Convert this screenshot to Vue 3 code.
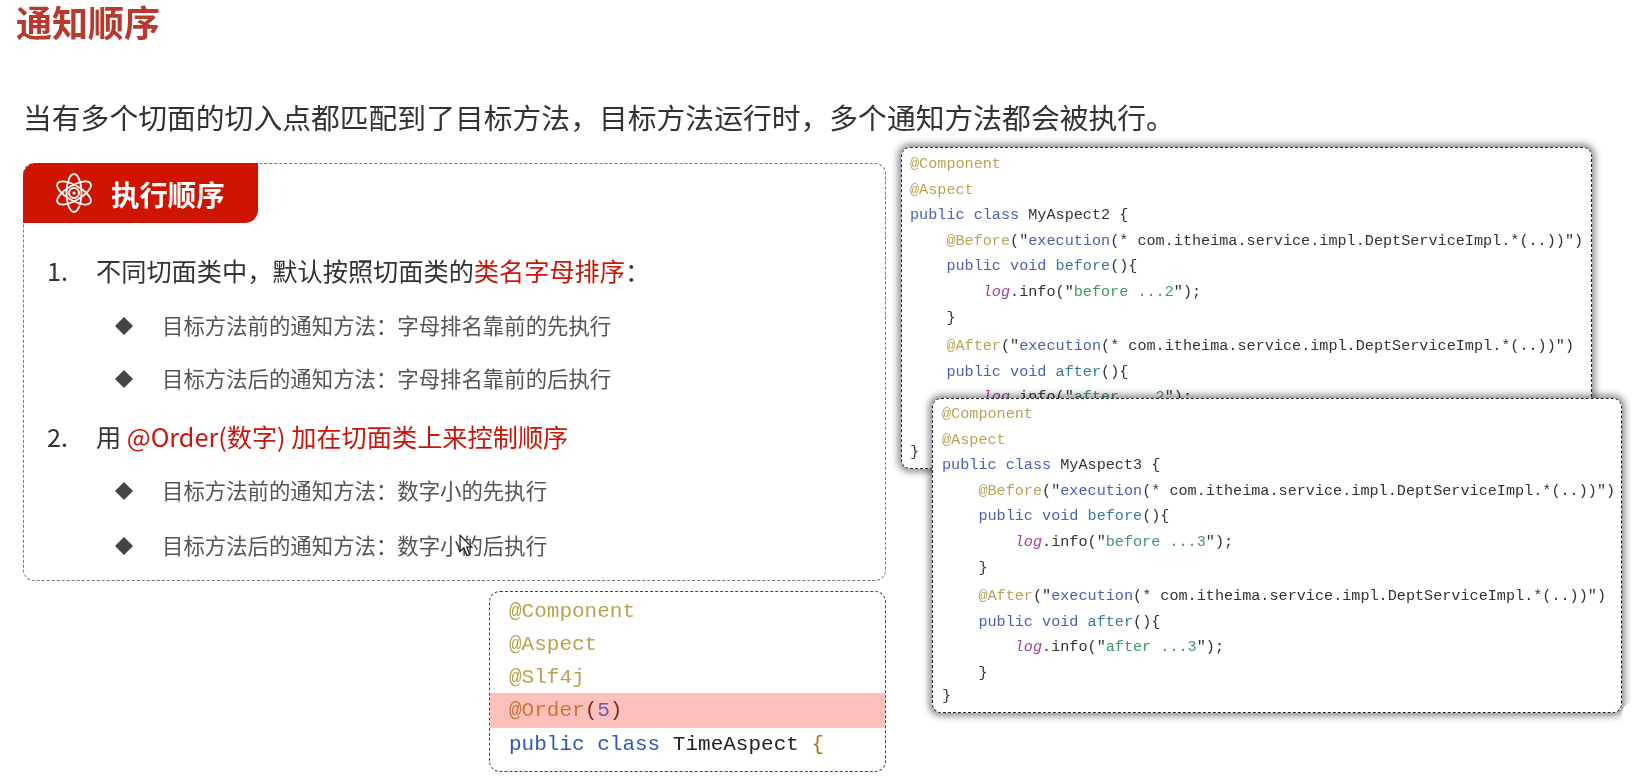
<script setup>
const rows = [
  { type: 'main', num: '1.', parts: [{ t: '不同切面类中，默认按照切面类的' }, { t: '类名字母排序', red: true }, { t: '：' }], cls: 'r1' },
  { type: 'sub', text: '目标方法前的通知方法：字母排名靠前的先执行', cls: 's1' },
  { type: 'sub', text: '目标方法后的通知方法：字母排名靠前的后执行', cls: 's2' },
  { type: 'main', num: '2.', parts: [{ t: '用 ' }, { t: '@Order(数字) 加在切面类上来控制顺序', red: true }], cls: 'r2' },
  { type: 'sub', text: '目标方法前的通知方法：数字小的先执行', cls: 's3' },
  { type: 'sub', text: '目标方法后的通知方法：数字小的后执行', cls: 's4' }
]

const aspect = (n) => [
  { c: 1, p: [['an', '@Component']] },
  { c: 1, p: [['an', '@Aspect']] },
  { p: [['kw', 'public class '], ['', 'MyAspect' + n + ' {']] },
  { p: [['', '    '], ['an', '@Before'], ['', '("'], ['kw', 'execution'], ['', '(* com.itheima.service.impl.DeptServiceImpl.*(..))")']] },
  { p: [['', '    '], ['kw', 'public void '], ['me', 'before'], ['', '(){']] },
  { p: [['', '        '], ['lg', 'log'], ['', '.info("'], ['st', 'before ...' + n], ['', '");']] },
  { p: [['', '    }']] },
  { gap: true, p: [['', '    '], ['an', '@After'], ['', '("'], ['kw', 'execution'], ['', '(* com.itheima.service.impl.DeptServiceImpl.*(..))")']] },
  { p: [['', '    '], ['kw', 'public void '], ['me', 'after'], ['', '(){']] },
  { p: [['', '        '], ['lg', 'log'], ['', '.info("'], ['st', 'after ...' + n], ['', '");']] },
  { p: [['', '    }']] },
  { end: true, p: [['', '}']] }
]
const a2 = aspect(2)
const a3 = aspect(3)
</script>

<template>
  <div class="page">
    <h1 class="title">通知顺序</h1>
    <p class="lead">当有多个切面的切入点都匹配到了目标方法，目标方法运行时，多个通知方法都会被执行。</p>

    <div class="columns">
      <div class="left">
        <section class="panel">
          <header class="tag">
            <svg class="atom" viewBox="0 0 40 40" fill="none" stroke="#fff" stroke-width="1.8">
              <ellipse cx="20" cy="20" rx="19" ry="7.5" transform="rotate(30 20 20)" />
              <ellipse cx="20" cy="20" rx="19" ry="7.5" transform="rotate(90 20 20)" />
              <ellipse cx="20" cy="20" rx="19" ry="7.5" transform="rotate(150 20 20)" />
              <circle cx="20" cy="20" r="5" stroke-width="2" />
              <circle cx="20" cy="20" r="1.6" fill="#fff" stroke="none" />
            </svg>
            <span>执行顺序</span>
          </header>
          <div class="list">
            <div v-for="r in rows" :key="r.cls" :class="[r.type, r.cls]">
              <template v-if="r.type === 'main'">
                <span class="num">{{ r.num }}</span>
                <span><span v-for="p in r.parts" :key="p.t" :class="{ red: p.red }">{{ p.t }}</span></span>
              </template>
              <template v-else>
                <svg class="diamond" viewBox="0 0 18 18"><polygon points="9,0 18,9 9,18 0,9" fill="#444" /></svg>
                <span>{{ r.text }}</span>
              </template>
            </div>
          </div>
        </section>

        <div class="snippet">
          <div class="sl an">@Component</div>
          <div class="sl an">@Aspect</div>
          <div class="sl an">@Slf4j</div>
          <div class="sl hl"><span class="or">@Order</span><span class="br">(</span><span class="nu">5</span><span class="br">)</span></div>
          <div class="sl"><span class="kw2">public class </span><span class="ink">TimeAspect </span><span class="brace">{</span></div>
        </div>
      </div>

      <div class="right">
        <div class="card first">
          <div v-for="(l, i) in a2" :key="i" class="cl" :class="{ gap: l.gap, end: l.end }"><span v-for="(s, j) in l.p" :key="j" :class="s[0]">{{ s[1] }}</span></div>
        </div>
        <div class="card second">
          <div v-for="(l, i) in a3" :key="i" class="cl" :class="{ gap: l.gap, tight: l.end }"><span v-for="(s, j) in l.p" :key="j" :class="s[0]">{{ s[1] }}</span></div>
        </div>
      </div>
    </div>

    <div class="corner"></div>
    <svg class="cursor" viewBox="0 0 14 22">
      <path d="M1 1 L1 16 L4.5 12.8 L7.5 20 L10 19 L7.2 12 L12 12 Z" fill="#fff" stroke="#222" stroke-width="1.2" />
    </svg>
  </div>
</template>

<style scoped>
.page {
  position: relative;
  width: 1634px;
  height: 779px;
  overflow: hidden;
  background: #fff;
  font-family: "Noto Sans CJK SC", "Noto Sans", sans-serif;
  color: #333;
  filter: blur(0.35px);
}
.title {
  margin: 0;
  padding-left: 16px;
  height: 42px;
  font-size: 36px;
  line-height: 42px;
  font-weight: 700;
  color: #b83a2e;
}
.lead {
  margin: 55px 0 10px;
  padding-left: 23px;
  height: 40px;
  font-size: 28.8px;
  line-height: 40px;
  color: #333;
  white-space: nowrap;
}
.columns {
  display: flex;
  gap: 15px;
  padding-left: 23px;
  align-items: flex-start;
}
.left {
  width: 863px;
  padding-top: 16px;
  display: flex;
  flex-direction: column;
}
.panel {
  box-sizing: border-box;
  height: 418px;
  border: 1px dashed #777;
  border-radius: 11px;
}
.tag {
  box-sizing: border-box;
  width: 235px;
  height: 60px;
  margin: -1px 0 0 -1px;
  padding-left: 31px;
  display: flex;
  align-items: center;
  gap: 17px;
  background: #cf1500;
  color: #fff;
  font-size: 28.4px;
  font-weight: 700;
  border-radius: 13px 0 13px 0;
}
.atom {
  width: 40px;
  height: 40px;
  flex: none;
}
.list {
  padding-left: 23px;
}
.main {
  display: flex;
  height: 34px;
  font-size: 25.2px;
  line-height: 34px;
  color: #333;
}
.num {
  width: 49px;
  flex: none;
}
.red {
  color: #c9150a;
}
.sub {
  display: flex;
  align-items: center;
  height: 30px;
  padding-left: 68px;
  font-size: 21.4px;
  line-height: 30px;
  color: #555;
}
.diamond {
  width: 18px;
  height: 18px;
  margin: 2px 29px 0 0;
  flex: none;
}
.r1 { margin-top: 30px; }
.s1 { margin-top: 23px; }
.s2 { margin-top: 23px; }
.r2 { margin-top: 26px; }
.s3 { margin-top: 22px; }
.s4 { margin-top: 25px; }

.snippet {
  box-sizing: border-box;
  align-self: flex-end;
  width: 397px;
  height: 181px;
  margin-top: 10px;
  padding-top: 3px;
  border: 1px dashed #444;
  border-radius: 11px;
  font-family: "Liberation Mono", monospace;
  font-size: 21px;
}
.sl {
  height: 33px;
  line-height: 33px;
  padding-left: 19px;
  white-space: pre;
}
.sl.an { color: #b9a250; }
.hl {
  background: #ffc0bc;
  height: 35px;
  line-height: 35px;
  margin-top: -1px;
}
.or { color: #c8753a; }
.br { color: #7a2a1a; }
.nu { color: #6a5cb0; }
.kw2 { color: #2f55c0; }
.ink { color: #222; }
.brace { color: #a5761a; }

.right {
  display: flex;
  flex-direction: column;
  align-items: flex-start;
}
.card {
  position: relative;
  box-sizing: border-box;
  background: #fff;
  border: 1px dashed #222;
  border-radius: 9px;
  box-shadow: 0 0 7px 3px rgba(0, 0, 0, 0.45);
  padding: 4px 0 4px 8px;
  font-family: "Liberation Mono", monospace;
  font-size: 15.17px;
  color: #333;
  overflow: hidden;
}
.first {
  width: 691px;
  height: 322px;
}
.second {
  width: 690px;
  height: 315px;
  margin: -71px 0 0 31px;
  padding: 3px 0 4px 9px;
}
.cl {
  height: 25.6px;
  line-height: 25.6px;
  white-space: pre;
}
.gap { margin-top: 3px; }
.end { margin-top: 3px; }
.tight { margin-top: -3px; }
.an { color: #b9a35a; }
.kw { color: #4a60b8; }
.me { color: #3a7a9e; }
.st { color: #3f9a68; }
.lg { color: #a0459e; font-style: italic; }

.corner {
  position: absolute;
  left: 1622px;
  top: 703px;
  width: 30px;
  height: 60px;
  background: #fff;
  border-radius: 10px 0 0 0;
}
.cursor {
  position: absolute;
  left: 459px;
  top: 534px;
  width: 15px;
  height: 24px;
}
</style>

<style>
html, body {
  margin: 0;
  background: #fff;
}
</style>
